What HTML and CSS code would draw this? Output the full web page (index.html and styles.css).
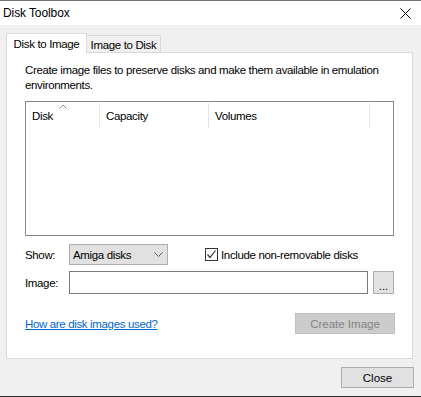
FILE: index.html
```html
<!DOCTYPE html>
<html lang="en">
<head>
  <meta charset="UTF-8" />
  <title>Disk Toolbox</title>
  <link rel="stylesheet" href="styles.css">
</head>
<body>
  <div class="window">
    <div class="titlebar">
      <span class="title">Disk Toolbox</span>
      <svg class="close-x" width="11" height="11" viewBox="0 0 11 11">
        <path d="M0.5 0.5L10.5 10.5M10.5 0.5L0.5 10.5" stroke="#000" stroke-width="1" fill="none" />
      </svg>
    </div>

    <div class="client">
      <div class="tabs">
        <div class="tab tab-active">Disk to Image</div>
        <div class="tab tab-idle">Image to Disk</div>
      </div>

      <div class="panel">
        <p class="intro">Create image files to preserve disks and make them available in emulation environments.</p>

        <div class="listview">
          <div class="lv-header">
            <div class="col col-disk">
              Disk
              <svg class="sort-arrow" width="8" height="5" viewBox="0 0 8 5">
                <path d="M0.5 4.5L4 1L7.5 4.5" stroke="#8c8c8c" stroke-width="1" fill="none" />
              </svg>
            </div>
            <div class="col col-cap">Capacity</div>
            <div class="col col-vol">Volumes</div>
            <div class="col col-rest"></div>
          </div>
        </div>

        <div class="row row-show">
          <span class="lbl">Show:</span>
          <div class="combo">
            <span>Amiga disks</span>
            <svg width="9" height="5" viewBox="0 0 9 5">
              <path d="M0.5 0.5L4.5 4.5L8.5 0.5" stroke="#606060" stroke-width="1" fill="none" />
            </svg>
          </div>
          <label class="check">
            <span class="box">
              <svg width="11" height="11" viewBox="0 0 11 11">
                <path d="M1.5 5.5L4 8.5L9.5 1.5" stroke="#333" stroke-width="1.2" fill="none" />
              </svg>
            </span>
            Include non-removable disks
          </label>
        </div>

        <div class="row row-image">
          <span class="lbl">Image:</span>
          <div class="textbox"></div>
          <button class="browse">...</button>
        </div>

        <div class="row row-bottom">
          <a class="help-link" href="#">How are disk images used?</a>
          <button class="btn btn-create" disabled>Create Image</button>
        </div>
      </div>

      <div class="footer">
        <button class="btn btn-close">Close</button>
      </div>
    </div>
  </div>
</body>
</html>
```

FILE: styles.css
```css
* {
  box-sizing: border-box;
}
body {
  margin: 0;
  width: 421px;
  height: 397px;
  background: #f0f0f0;
  font-family: "Liberation Sans", Arial, sans-serif;
  font-size: 11.5px;
  letter-spacing: -0.35px;
  color: #000;
  overflow: hidden;
}
.window {
  height: 397px;
  border-top: 1px solid #717171;
  border-bottom: 1px solid #2b2b2b;
}
.titlebar {
  height: 24px;
  background: #fff;
  display: flex;
  align-items: center;
  justify-content: space-between;
  padding: 0 10px 0 3px;
}
.title {
  font-size: 12px;
  letter-spacing: -0.1px;
}
.close-x {
  margin-top: 1px;
}
.client {
  padding-top: 8px;
}
.tabs {
  display: flex;
  align-items: flex-end;
  height: 19px;
  margin-left: 6px;
}
.tab {
  display: flex;
  align-items: center;
  justify-content: center;
  border: 1px solid #d9d9d9;
  border-bottom: none;
}
.tab-active {
  position: relative;
  z-index: 1;
  width: 81px;
  height: 20px;
  margin-bottom: -1px;
  background: #fff;
}
.tab-idle {
  width: 74px;
  height: 17px;
  border-left: none;
  background: #f0f0f0;
  padding-top: 2px;
}
.panel {
  width: 407px;
  height: 307px;
  margin-left: 6px;
  background: #fff;
  border: 1px solid #d9d9d9;
  padding: 10px 18px 0 18px;
}
.intro {
  margin: 0;
  line-height: 15px;
  height: 30px;
}
.listview {
  margin-top: 8px;
  height: 135px;
  border: 1px solid #828790;
}
.lv-header {
  display: flex;
  height: 26px;
  padding-top: 1px;
}
.col {
  height: 25px;
  display: flex;
  align-items: center;
  padding-left: 6px;
  border-right: 1px solid #e5e5e5;
}
.col-disk {
  position: relative;
  width: 74px;
}
.col-cap {
  width: 109px;
}
.col-vol {
  width: 161px;
}
.col-rest {
  flex: 1;
  border-right: none;
}
.sort-arrow {
  position: absolute;
  top: 1px;
  left: 33px;
}
.row {
  display: flex;
  align-items: center;
}
.lbl {
  width: 44px;
}
.row-show {
  margin-top: 8px;
  height: 21px;
}
.combo {
  width: 99px;
  height: 21px;
  background: #e1e1e1;
  border: 1px solid #adadad;
  display: flex;
  align-items: center;
  justify-content: space-between;
  padding: 0 4px 0 3px;
}
.check {
  display: flex;
  align-items: center;
  margin-left: 37px;
}
.box {
  width: 13px;
  height: 13px;
  border: 1px solid #333;
  margin-right: 3px;
  display: flex;
  align-items: center;
  justify-content: center;
}
.row-image {
  margin-top: 6px;
  height: 23px;
}
.textbox {
  width: 299px;
  height: 23px;
  border: 1px solid #7a7a7a;
  background: #fff;
}
.browse {
  width: 21px;
  height: 23px;
  margin-left: 5px;
  padding: 6px 0 0 0;
  font: inherit;
  background: #e1e1e1;
  border: 1px solid #adadad;
}
.row-bottom {
  margin-top: 19px;
  height: 21px;
  justify-content: space-between;
}
.help-link {
  color: #0066cc;
  text-decoration: underline;
}
.btn {
  height: 21px;
  padding: 0;
  font: inherit;
  background: #e1e1e1;
  border: 1px solid #adadad;
  color: #000;
}
.btn-create {
  width: 100px;
  margin-right: -1px;
  background: #cccccc;
  border-color: #bfbfbf;
  color: #838383;
}
.footer {
  display: flex;
  justify-content: flex-end;
  padding: 8px 7px 0 0;
}
.btn-close {
  width: 73px;
}
```
